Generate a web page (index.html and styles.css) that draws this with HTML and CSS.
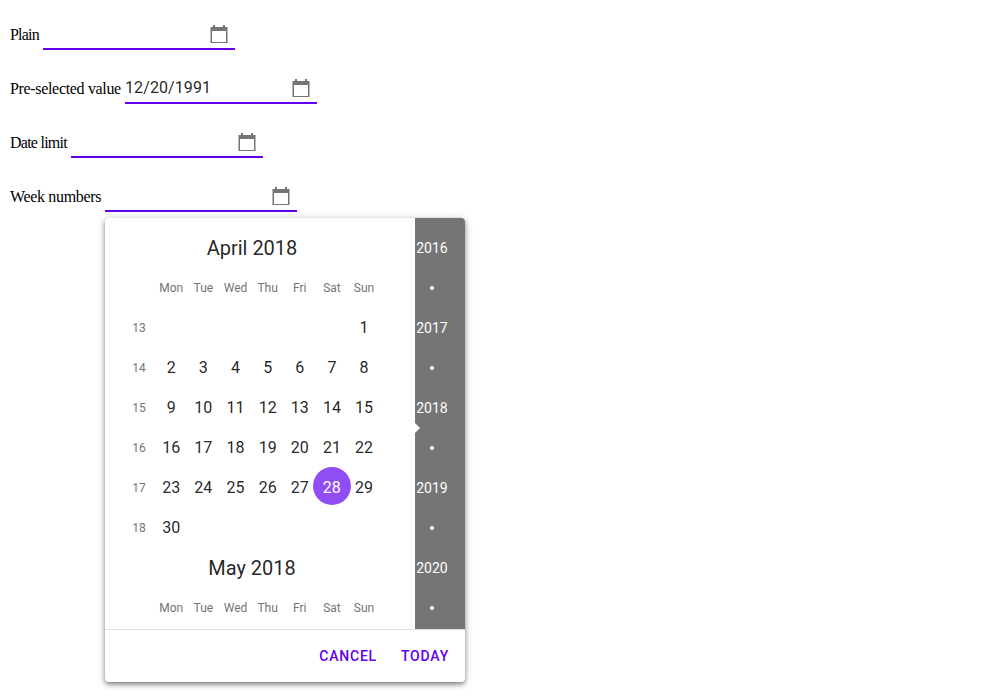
FILE: index.html
```
<!DOCTYPE html>
<html lang="en">
<head>
<meta charset="utf-8">
<title>Date picker</title>
<link rel="stylesheet" href="styles.css">
</head>
<body>
<svg width="0" height="0" class="defs">
  <symbol id="calendar" viewBox="0 0 18 18">
    <path fill="#757575" fill-rule="evenodd" d="M3 0h2v2h8V0h2v2h2.5v16H.5V2H3zM2 6v11h14V6z"/>
  </symbol>
</svg>
<main class="form">
  <div class="row"><label class="plain">Plain</label><div class="field"><span></span><svg class="icon"><use href="#calendar"/></svg></div></div>
  <div class="row"><label class="preselected">Pre-selected value</label><div class="field"><span>12/20/1991</span><svg class="icon"><use href="#calendar"/></svg></div></div>
  <div class="row"><label class="limit">Date limit</label><div class="field"><span></span><svg class="icon"><use href="#calendar"/></svg></div></div>
  <div class="row"><label class="weeks">Week numbers</label><div class="field"><span></span><svg class="icon"><use href="#calendar"/></svg>
    <section class="datepicker">
      <div class="content">
        <div class="months">
          <h2>April 2018</h2>
          <div class="grid names"><i></i><b>Mon</b><b>Tue</b><b>Wed</b><b>Thu</b><b>Fri</b><b>Sat</b><b>Sun</b></div>
          <div class="grid"><i>13</i><b></b><b></b><b></b><b></b><b></b><b></b><b>1</b></div>
          <div class="grid"><i>14</i><b>2</b><b>3</b><b>4</b><b>5</b><b>6</b><b>7</b><b>8</b></div>
          <div class="grid"><i>15</i><b>9</b><b>10</b><b>11</b><b>12</b><b>13</b><b>14</b><b>15</b></div>
          <div class="grid"><i>16</i><b>16</b><b>17</b><b>18</b><b>19</b><b>20</b><b>21</b><b>22</b></div>
          <div class="grid"><i>17</i><b>23</b><b>24</b><b>25</b><b>26</b><b>27</b><b class="selected">28</b><b>29</b></div>
          <div class="grid"><i>18</i><b>30</b></div>
          <h2>May 2018</h2>
          <div class="grid names"><i></i><b>Mon</b><b>Tue</b><b>Wed</b><b>Thu</b><b>Fri</b><b>Sat</b><b>Sun</b></div>
        </div>
        <div class="years">
          <span>2016</span><em></em><span>2017</span><em></em><span>2018</span><em></em><span>2019</span><em></em><span>2020</span><em></em>
        </div>
      </div>
      <div class="actions"><button>CANCEL</button><button>TODAY</button></div>
    </section>
  </div></div>
</main>
</body>
</html>
```
FILE: styles.css
```
html, body { height: 100%; }
body { margin: 0; background: #fff; }
.defs { position: absolute; }
.form {
  box-sizing: border-box;
  min-height: 100vh;
  display: flex;
  flex-direction: column;
  gap: 22px;
  padding: 18px 10px 0;
  font: 16px/32px "Liberation Serif", serif;
  color: #000;
}
.row { display: flex; height: 32px; }
label { padding-top: 1px; white-space: nowrap; }
.plain { width: 33px; letter-spacing: -0.8px; }
.preselected { width: 115px; letter-spacing: -0.33px; }
.limit { width: 61px; letter-spacing: -0.75px; }
.weeks { width: 95px; letter-spacing: -0.33px; }
.field {
  position: relative;
  box-sizing: border-box;
  display: flex;
  justify-content: space-between;
  width: 192px;
  height: 32px;
  border-bottom: 2px solid #6200ee;
  font-family: Roboto, sans-serif;
  color: rgba(0, 0, 0, .87);
}
.field > span { line-height: 31px; letter-spacing: .1px; }
.icon { width: 18px; height: 18px; margin: 7px 7px 0 0; }
.datepicker {
  position: absolute;
  top: 38px;
  left: 0;
  width: 360px;
  height: 464px;
  border-radius: 4px;
  overflow: hidden;
  background: #fff;
  box-shadow: 0 2px 4px -1px rgba(0,0,0,.3), 0 3px 5px rgba(0,0,0,.22), 0 1px 10px rgba(0,0,0,.2);
}
.content { display: flex; height: 411px; border-bottom: 1px solid #dfdfdf; }
.months { width: 292px; padding: 10px 0 0 18px; overflow: hidden; }
h2 { margin: 0; width: 258px; font-size: 20px; font-weight: 400; line-height: 40px; text-align: center; }
.grid { display: grid; grid-template-columns: repeat(8, 32.15px); height: 40px; line-height: 40px; text-align: center; }
.grid i { font-size: 12px; font-style: normal; color: #757575; }
.grid b { font-weight: 400; white-space: nowrap; }
.names b { font-size: 12px; color: #757575; }
.grid .selected {
  width: 38px;
  height: 38px;
  margin: -1px 0 0 -3px;
  border-radius: 50%;
  background: #914df4;
  color: #fff;
  line-height: 42px;
}
.years {
  position: relative;
  width: 50px;
  padding-top: 10px;
  box-sizing: border-box;
  background: #757575;
  color: #fff;
  font-size: 14px;
}
.years::before {
  content: "";
  position: absolute;
  left: 0;
  top: 205px;
  border: 5px solid transparent;
  border-left-color: #fff;
  border-right: 0;
}
.years span, .years em { display: flex; align-items: center; justify-content: center; width: 34px; height: 40px; }
.years em::before { content: ""; width: 4px; height: 4px; border-radius: 50%; background: #fff; }
.actions { display: flex; justify-content: flex-end; height: 52px; padding-right: 16px; gap: 24px; }
button {
  padding: 0;
  border: 0;
  background: none;
  color: #6200ee;
  font: 500 14px/52px Roboto, sans-serif;
  letter-spacing: .8px;
}
```
